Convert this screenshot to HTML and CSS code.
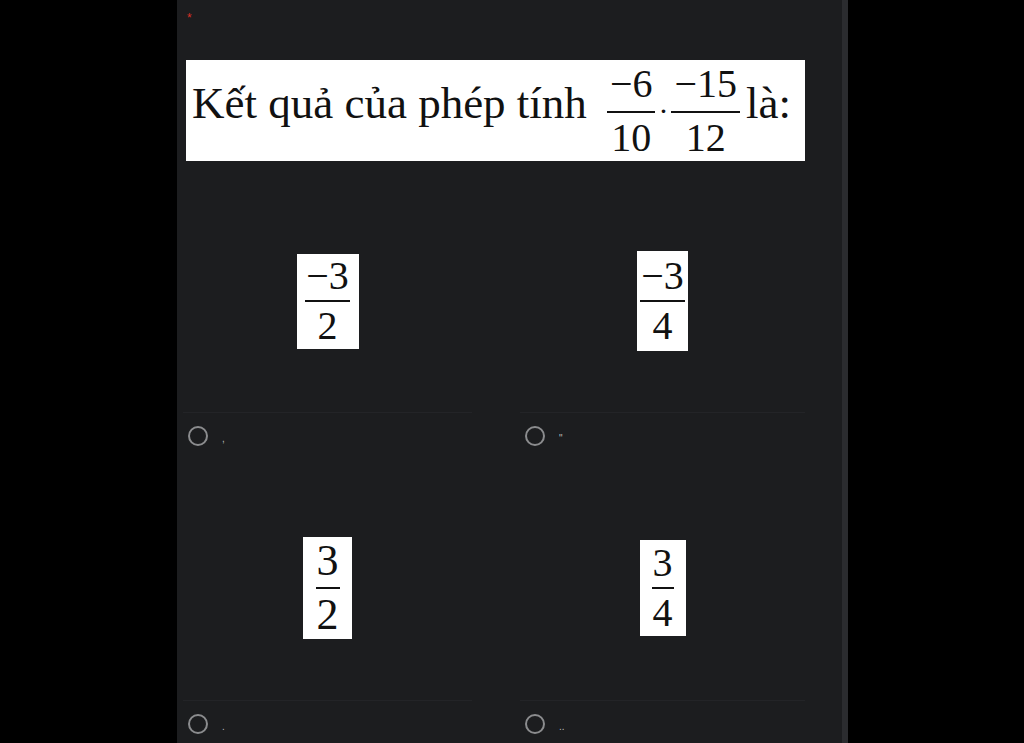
FILE: index.html
```html
<!DOCTYPE html>
<html lang="vi">
<head>
<meta charset="utf-8">
<title>Câu hỏi</title>
<link rel="stylesheet" href="styles.css">
</head>
<body>
<div class="page">
  <div class="side"></div>
  <main class="panel">
    <div class="req">*</div>
    <div class="question">
      <span class="qtext">Kết quả của phép tính</span>
      <span class="frac q-frac first"><span class="num">−6</span><span class="den">10</span></span>
      <span class="dot">·</span>
      <span class="frac q-frac"><span class="num">−15</span><span class="den">12</span></span>
      <span class="qtext tail">là:</span>
    </div>
    <div class="options">
      <div class="option">
        <div class="opt-img row1">
          <div class="card card-a"><span class="frac o-frac"><span class="num">−3</span><span class="den">2</span></span></div>
        </div>
        <div class="opt-label"><span class="radio"></span><span class="mark">,</span></div>
      </div>
      <div class="option">
        <div class="opt-img row1">
          <div class="card card-b"><span class="frac o-frac"><span class="num">−3</span><span class="den">4</span></span></div>
        </div>
        <div class="opt-label"><span class="radio"></span><span class="mark">"</span></div>
      </div>
      <div class="option">
        <div class="opt-img row2">
          <div class="card card-c"><span class="frac o-frac big"><span class="num">3</span><span class="den">2</span></span></div>
        </div>
        <div class="opt-label"><span class="radio"></span><span class="mark">.</span></div>
      </div>
      <div class="option">
        <div class="opt-img row2">
          <div class="card card-d"><span class="frac o-frac"><span class="num">3</span><span class="den">4</span></span></div>
        </div>
        <div class="opt-label"><span class="radio"></span><span class="mark">..</span></div>
      </div>
    </div>
  </main>
  <div class="scroll"></div>
</div>
</body>
</html>
```

FILE: styles.css
```css
html, body {
  margin: 0;
  padding: 0;
  background: #000;
  height: 100%;
  overflow: hidden;
}
.page {
  display: flex;
  height: 743px;
}
.side {
  width: 177px;
  flex: none;
}
.panel {
  width: 665px;
  flex: none;
  background: #1c1d1f;
  height: 743px;
  overflow: hidden;
  font-family: "Liberation Serif", "Times New Roman", serif;
}
.scroll {
  width: 6px;
  flex: none;
  background: #2b2c2f;
}
.req {
  color: #d93025;
  font-family: "Liberation Sans", Arial, sans-serif;
  font-size: 12px;
  line-height: 12px;
  height: 12px;
  margin: 12px 0 0 10px;
}
.question {
  margin: 36px 0 0 9px;
  width: 619px;
  height: 101px;
  background: #fff;
  box-sizing: border-box;
  display: flex;
  align-items: center;
  padding-left: 6px;
  color: #111;
}
.qtext {
  font-size: 45px;
  line-height: 1;
  margin-bottom: 14px;
}
.qtext.tail {
  margin-left: 6px;
}
.frac {
  display: inline-flex;
  flex-direction: column;
  align-items: center;
  color: #111;
  line-height: 1;
}
.frac .num {
  border-bottom: 2px solid #111;
  padding: 0 2px 5px;
  text-align: center;
}
.frac .den {
  padding-top: 4px;
  text-align: center;
}
.q-frac {
  font-size: 40px;
}
.q-frac .num {
  padding: 0 3px 7px;
}
.q-frac .den {
  padding-top: 5px;
}
.q-frac.first {
  margin-left: 20px;
}
.dot {
  font-size: 30px;
  margin: 0 3px;
}
.options {
  display: grid;
  grid-template-columns: 289px 285px;
  column-gap: 48px;
  margin-left: 6px;
}
.opt-img {
  display: flex;
  align-items: center;
  justify-content: center;
  border-bottom: 1px solid #232427;
}
.opt-img.row1 {
  height: 225px;
  margin-top: 27px;
  padding-top: 2px;
  box-sizing: border-box;
}
.opt-img.row2 {
  height: 242px;
  padding-top: 16px;
  box-sizing: border-box;
}
.card {
  background: #fff;
  display: flex;
  align-items: center;
  justify-content: center;
  box-sizing: border-box;
}
.card-a { width: 62px; height: 95px; }
.card-b { width: 51px; height: 100px; }
.card-c { width: 49px; height: 102px; }
.card-d { width: 46px; height: 96px; }
.o-frac {
  font-size: 40px;
}
.o-frac .num {
  padding: 0 1px 4px;
}
.o-frac.big {
  font-size: 44px;
}
.opt-label {
  height: 46px;
  display: flex;
  align-items: center;
  padding-left: 5px;
}
.radio {
  width: 16px;
  height: 16px;
  border: 2px solid #8b8c8e;
  border-radius: 50%;
  flex: none;
}
.mark {
  color: #b9babc;
  font-family: "Liberation Sans", Arial, sans-serif;
  font-size: 10px;
  margin-left: 14px;
  margin-top: 4px;
}
```
